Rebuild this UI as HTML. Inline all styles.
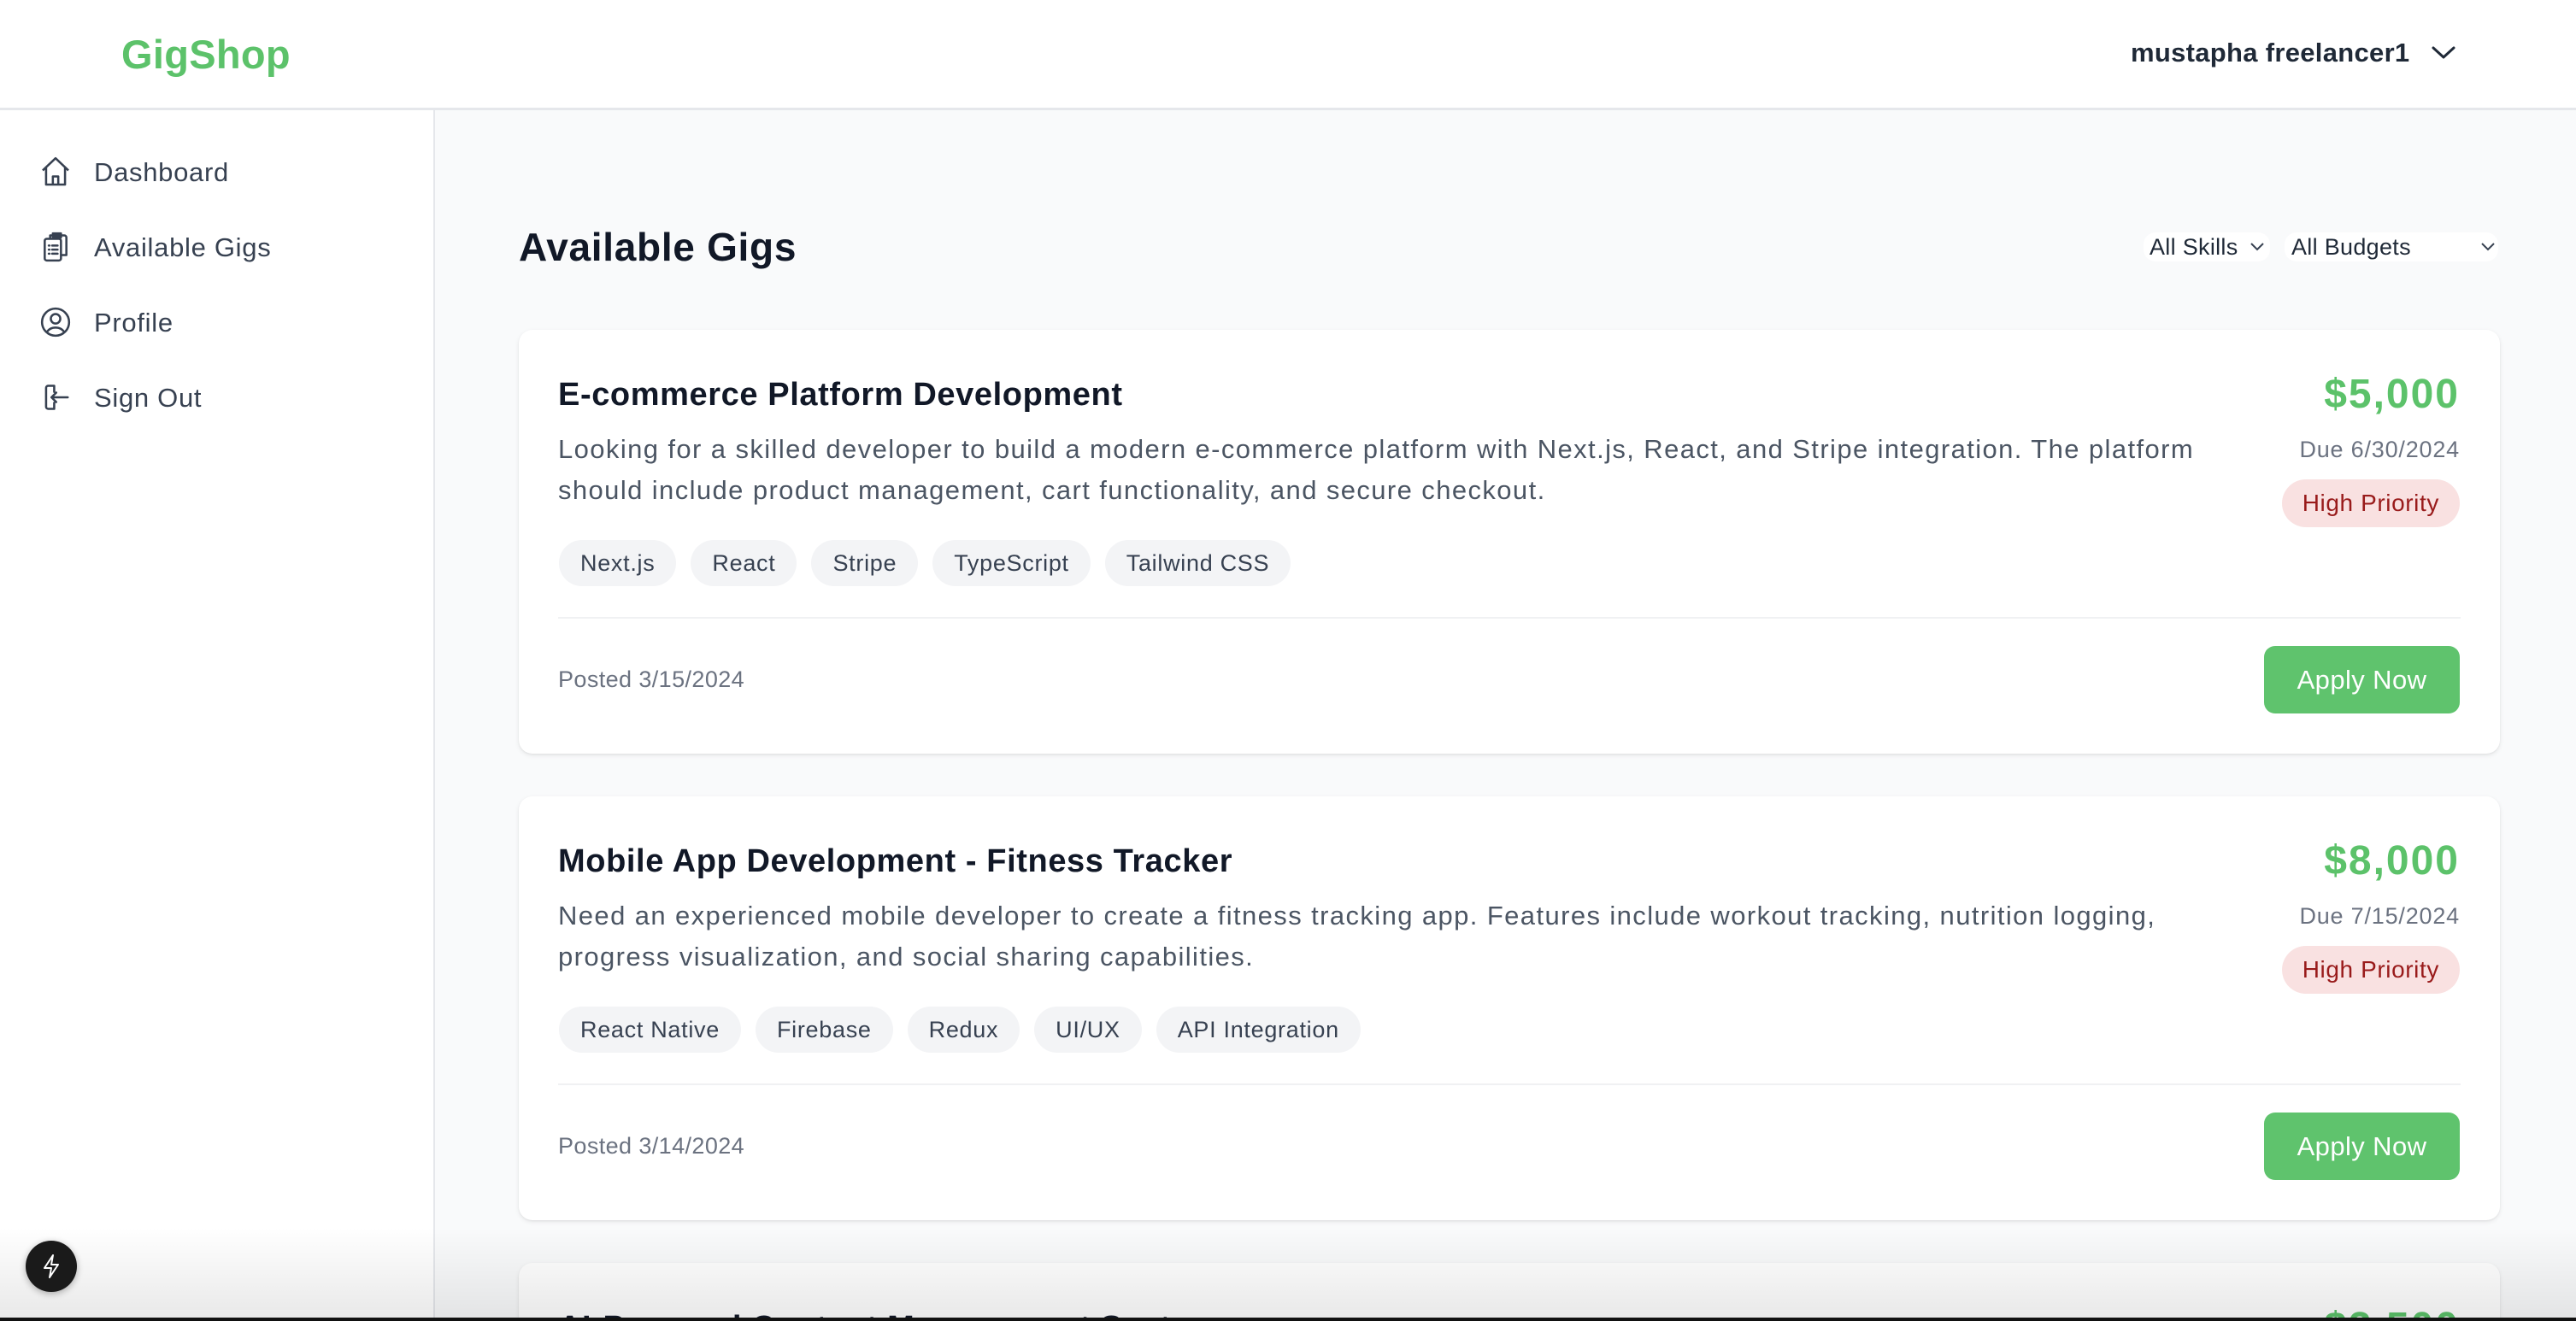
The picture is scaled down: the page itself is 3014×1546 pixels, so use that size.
<!DOCTYPE html>
<html><head><meta charset="utf-8"><style>
*{box-sizing:border-box;margin:0;padding:0}
html,body{width:3014px;height:1546px;overflow:hidden}
body{font-family:"Liberation Sans",sans-serif;background:#f9fafb;color:#111827}
#w{position:relative;width:3014px;height:1546px;overflow:hidden;background:#f9fafb}
.hdr{position:absolute;left:0;top:0;width:3014px;height:129px;background:#fff;border-bottom:3px solid #e5e7eb}
.logo{position:absolute;left:142px;top:36px;font-size:47px;font-weight:700;color:#5cc26a;letter-spacing:0.3px}
.user{position:absolute;left:2493px;top:44px;font-size:31px;color:#1f2937;font-weight:600;letter-spacing:0.3px}
.side{position:absolute;left:0;top:129px;width:509px;height:1417px;background:#fff;border-right:2px solid #e5e7eb}
.nav{position:absolute;left:110px;font-size:31px;color:#374151;letter-spacing:0.7px}
.ic{position:absolute;left:46px}
h1{position:absolute;left:607px;top:262px;font-size:46px;font-weight:700;color:#111827;letter-spacing:0.7px}
.filt{position:absolute;top:272px;font-size:27px;color:#1f2937;background:#fff;border-radius:14px;height:34px;line-height:34px;letter-spacing:0.3px}
.card{position:absolute;left:607px;width:2318px;height:496px;background:#fff;border-radius:16px;box-shadow:0 2px 6px rgba(0,0,0,.08),0 1px 2px rgba(0,0,0,.05)}
.t{position:absolute;left:46px;top:55px;font-size:38px;font-weight:700;color:#111827;white-space:nowrap;letter-spacing:0.6px}
.d{position:absolute;left:46px;top:116px;font-size:31px;line-height:48px;color:#4b5563;white-space:nowrap;letter-spacing:1.4px}
.tags{position:absolute;left:47px;top:246px;display:flex;gap:17px}
.tag{height:54px;line-height:54px;padding:0 25px;border-radius:27px;background:#f3f4f6;font-size:27px;color:#374151;letter-spacing:0.7px}
.hr{position:absolute;left:46px;right:46px;top:336px;height:2px;background:#f0f1f3}
.posted{position:absolute;left:46px;top:394px;font-size:27px;color:#6b7280;letter-spacing:0.4px}
.btn{position:absolute;right:47px;top:370px;width:229px;height:79px;background:#5fc36d;border-radius:13px;color:#fff;font-size:31px;text-align:center;line-height:79px;letter-spacing:0.4px}
.price{position:absolute;right:47px;top:48px;font-size:48px;font-weight:700;color:#5cc26a;letter-spacing:2px}
.due{position:absolute;right:47px;top:125px;font-size:27px;color:#6b7280;letter-spacing:0.8px}
.badge{position:absolute;right:47px;top:175px;height:56px;line-height:56px;padding:0 24px;border-radius:28px;background:#f9e1e1;color:#991b1b;font-size:28px;letter-spacing:0.6px}
.shade{position:absolute;left:0;right:0;bottom:0;height:110px;background:linear-gradient(rgba(0,0,0,0),rgba(0,0,0,.09))}
.blk{position:absolute;left:0;right:0;bottom:0;height:4px;background:#111}
</style></head><body><div id="w">
<div class="hdr">
<div class="logo">GigShop</div>
<div class="user">mustapha freelancer1</div>
<svg style="position:absolute;left:2844px;top:52px" width="30" height="20" viewBox="0 0 30 20"><path d="M3 4l12 11 12-11" fill="none" stroke="#1f2937" stroke-width="3" stroke-linecap="round" stroke-linejoin="round"/></svg>
</div>
<div class="side">
<svg class="ic" style="top:53px" width="38" height="38" viewBox="0 0 24 24" fill="none" stroke="#374151" stroke-width="1.6" stroke-linejoin="round"><path d="M2.5 11L12 2l9.5 9M5 9v12.5h14V9M10 21.5v-6h4v6"/></svg>
<div class="nav" style="top:55px">Dashboard</div>
<svg class="ic" style="top:141px" width="38" height="38" viewBox="0 0 24 24" fill="none" stroke="#374151" stroke-width="1.6" stroke-linejoin="round"><rect x="4" y="6" width="12" height="16" rx="1.5"/><path d="M8 6V3.5h10.5a1.5 1.5 0 011.5 1.5v13h-4M10 2h6v3h-6z"/><path d="M7 11h.5M9.5 11h4M7 14h.5M9.5 14h4M7 17h.5M9.5 17h4" stroke-linecap="round"/></svg>
<div class="nav" style="top:143px">Available Gigs</div>
<svg class="ic" style="top:229px" width="38" height="38" viewBox="0 0 24 24" fill="none" stroke="#374151" stroke-width="1.6"><circle cx="12" cy="12" r="10"/><circle cx="12" cy="9.5" r="3.5"/><path d="M5.5 19.5c1.5-2.5 4-3.5 6.5-3.5s5 1 6.5 3.5"/></svg>
<div class="nav" style="top:231px">Profile</div>
<svg class="ic" style="top:317px" width="38" height="38" viewBox="0 0 24 24" fill="none" stroke="#374151" stroke-width="1.6" stroke-linecap="round" stroke-linejoin="round"><path d="M11 8V3.5H6.5A1.5 1.5 0 005 5v14a1.5 1.5 0 001.5 1.5H11V16M21 12H9M12.5 8.5L9 12l3.5 3.5"/></svg>
<div class="nav" style="top:319px">Sign Out</div>
</div>
<h1>Available Gigs</h1>
<div class="filt" style="left:2508px;width:148px;padding-left:7px">All Skills</div>
<svg style="position:absolute;left:2632px;top:282px" width="18" height="14" viewBox="0 0 18 14"><path d="M2 3l7 7 7-7" fill="none" stroke="#374151" stroke-width="2"/></svg>
<div class="filt" style="left:2673px;width:250px;padding-left:8px">All Budgets</div>
<svg style="position:absolute;left:2902px;top:282px" width="18" height="14" viewBox="0 0 18 14"><path d="M2 3l7 7 7-7" fill="none" stroke="#374151" stroke-width="2"/></svg>

<div class="card" style="top:386px">
<div class="t">E-commerce Platform Development</div>
<div class="d">Looking for a skilled developer to build a modern e-commerce platform with Next.js, React, and Stripe integration. The platform<br>should include product management, cart functionality, and secure checkout.</div>
<div class="tags"><div class="tag">Next.js</div><div class="tag">React</div><div class="tag">Stripe</div><div class="tag">TypeScript</div><div class="tag">Tailwind CSS</div></div>
<div class="hr"></div>
<div class="posted">Posted 3/15/2024</div>
<div class="btn">Apply Now</div>
<div class="price">$5,000</div>
<div class="due">Due 6/30/2024</div>
<div class="badge">High Priority</div>
</div>

<div class="card" style="top:932px">
<div class="t">Mobile App Development - Fitness Tracker</div>
<div class="d">Need an experienced mobile developer to create a fitness tracking app. Features include workout tracking, nutrition logging,<br>progress visualization, and social sharing capabilities.</div>
<div class="tags"><div class="tag">React Native</div><div class="tag">Firebase</div><div class="tag">Redux</div><div class="tag">UI/UX</div><div class="tag">API Integration</div></div>
<div class="hr"></div>
<div class="posted">Posted 3/14/2024</div>
<div class="btn">Apply Now</div>
<div class="price">$8,000</div>
<div class="due">Due 7/15/2024</div>
<div class="badge">High Priority</div>
</div>

<div class="card" style="top:1478px;height:68px;overflow:hidden;border-radius:16px 16px 0 0">
<div class="t">AI-Powered Content Management System</div>
<div class="price">$3,500</div>
</div>

<div class="shade"></div>
<div style="position:absolute;left:30px;top:1452px;width:60px;height:60px;border-radius:50%;background:#1a1a1a;box-shadow:0 2px 8px rgba(0,0,0,.3)"></div>
<svg style="position:absolute;left:46px;top:1466px" width="28" height="32" viewBox="0 0 28 32"><path d="M16 3L6 18h8l-2 11 10-15h-8z" fill="none" stroke="#fff" stroke-width="2" stroke-linejoin="round"/></svg>
<div class="blk"></div>
</div></body></html>
